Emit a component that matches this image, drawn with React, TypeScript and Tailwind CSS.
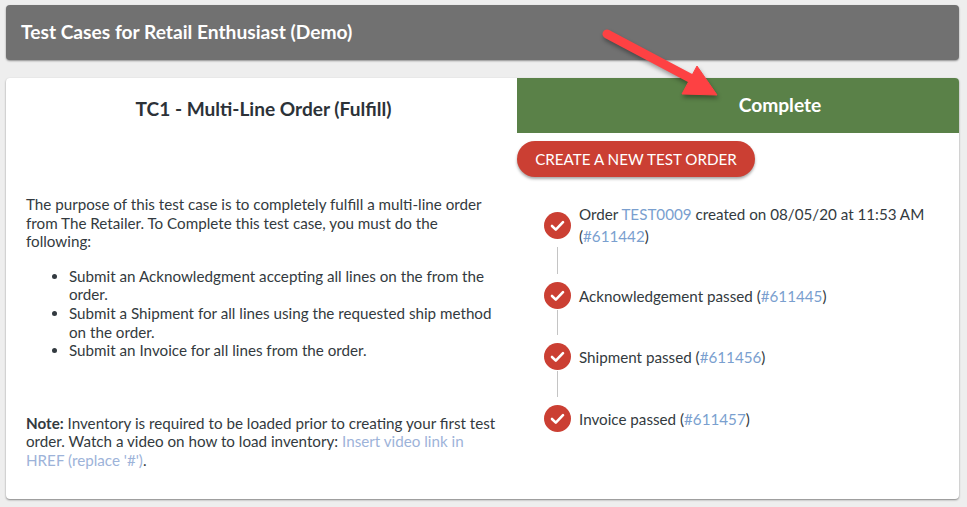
const link = "text-[#7a9fcf]";

const steps = [
  {
    content: (
      <>
        Order <a className={link}>TEST0009</a> created on 08/05/20 at 11:53 AM (<a className={link}>#611442</a>)
      </>
    ),
    rowClass: "h-[44px]",
    lineClass: "h-[27px] mb-[8px]",
  },
  {
    content: (
      <>
        Acknowledgement passed (<a className={link}>#611445</a>)
      </>
    ),
    rowClass: "h-[27px]",
    lineClass: "h-[25px] mt-[1px] mb-[8px]",
  },
  {
    content: (
      <>
        Shipment passed (<a className={link}>#611456</a>)
      </>
    ),
    rowClass: "h-[27px]",
    lineClass: "h-[26px] mt-[1px] mb-[8px]",
  },
  {
    content: (
      <>
        Invoice passed (<a className={link}>#611457</a>)
      </>
    ),
    rowClass: "h-[27px]",
    lineClass: "",
  },
];

function CheckCircle() {
  return (
    <svg viewBox="0 0 27 27" className="w-[27px] h-[27px] shrink-0">
      <circle cx="13.5" cy="13.5" r="13.5" fill="#cb3f33" />
      <path d="M8 14l3.8 3.6 7.2-7.4" fill="none" stroke="#fff" strokeWidth="2.6" strokeLinecap="round" strokeLinejoin="round" />
    </svg>
  );
}

function Arrow() {
  return (
    <svg viewBox="0 0 140 90" className="absolute left-[590px] top-[20px] w-[140px] h-[90px] pointer-events-none">
      <g className="drop-shadow-[1px_3px_2px_rgba(0,0,0,0.35)]">
        <path d="M17 14 L100 58" stroke="#fd4143" strokeWidth="9" strokeLinecap="round" fill="none" />
        <path d="M107 46 L127 75 L92 74 Z" fill="#fd4143" stroke="#fd4143" strokeWidth="1" strokeLinejoin="round" />
      </g>
    </svg>
  );
}

export default function App() {
  return (
    <div className="relative w-[967px] h-[507px] bg-[#eeeeee] pl-[6px] pr-[8px] pt-[5px] overflow-hidden font-['Lato',sans-serif] text-[#333a40]">
      <div className="h-[55px] bg-[#717171] rounded-[4px] shadow-[0_1px_2px_rgba(0,0,0,0.4)] flex items-center pl-[15px] text-white text-[19.2px] font-bold">
        Test Cases for Retail Enthusiast (Demo)
      </div>

      <div className="mt-[18px] h-[421px] bg-white rounded-[4px] shadow-[0_1px_2px_rgba(0,0,0,0.45)] flex">
        <div className="w-[511px] shrink-0">
          <h2 className="h-[62px] flex items-center justify-center pl-[4px] text-[19.1px] font-bold text-[#2c3238]">
            TC1 - Multi-Line Order (Fulfill)
          </h2>
          <div className="mt-[55px] pl-[20px] pr-[17px] text-[15.2px] leading-[18.6px]">
            <p>
              The purpose of this test case is to completely fulfill a multi-line order from The Retailer. To Complete this test case, you must do the following:
            </p>
            <ul className="list-disc mt-[16px] pl-[43px]">
              <li>Submit an Acknowledgment accepting all lines on the from the order.</li>
              <li>Submit a Shipment for all lines using the requested ship method on the order.</li>
              <li>Submit an Invoice for all lines from the order.</li>
            </ul>
            <p className="mt-[54px]">
              <b>Note:</b> Inventory is required to be loaded prior to creating your first test order. Watch a video on how to load inventory:{" "}
              <a className="text-[#9db3d9]">Insert video link in HREF (replace '#')</a>.
            </p>
          </div>
        </div>

        <div className="flex-1 min-w-0">
          <div className="h-[55px] pb-[1px] bg-[#5a8148] rounded-tr-[4px] flex items-center justify-center pl-[84px] text-white text-[19.2px] font-bold">
            Complete
          </div>
          <button className="mt-[8px] h-[36px] w-[238px] rounded-full bg-[#cb3f33] text-white text-[15.2px] shadow-[0_2px_3px_rgba(0,0,0,0.35)]">
            CREATE A NEW TEST ORDER
          </button>
          <div className="mt-[26px] pl-[27px] pr-[14px] text-[15.2px] leading-[22px]">
            {steps.map((step, i) => (
              <div key={i}>
                <div className={`flex items-center gap-[8px] ${step.rowClass}`}>
                  <CheckCircle />
                  <div>{step.content}</div>
                </div>
                {step.lineClass && <div className={`ml-[13px] w-px bg-[#c4c4c4] ${step.lineClass}`} />}
              </div>
            ))}
          </div>
        </div>
      </div>

      <Arrow />
    </div>
  );
}
